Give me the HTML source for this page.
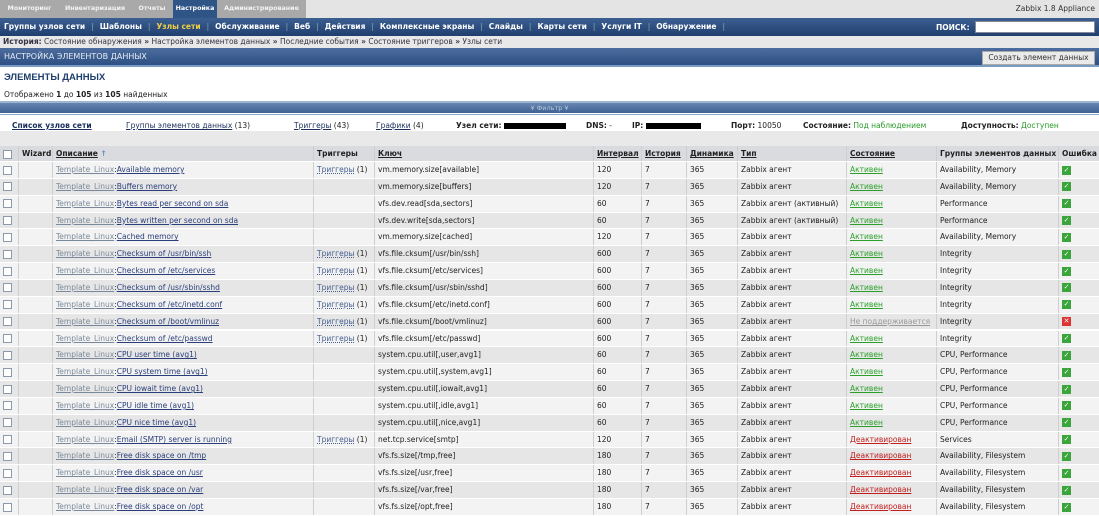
<!DOCTYPE html>
<html><head><meta charset="utf-8"><style>
*{margin:0;padding:0;box-sizing:border-box}
body{width:1099px;height:510px;overflow:hidden;background:#fff;font-family:"DejaVu Sans",Verdana,sans-serif;font-size:7.5px;color:#222;position:relative}
.abs{position:absolute}
#top{left:0;top:0;width:1099px;height:18px;background:#e4e4e4}
.tab{position:absolute;top:0;height:18px;line-height:17px;color:#f4f4f4;font-weight:bold;background:#a9a9a9;font-size:6.3px;text-align:center;white-space:nowrap;overflow:hidden}
#sub{left:0;top:18px;width:1099px;height:18px;background:linear-gradient(#3c5f92,#1f3f6e);color:#fff;font-weight:bold;line-height:18px;padding-left:4px;white-space:nowrap}
#sub span.sep{color:#8aa;margin:0 6px;font-weight:normal}
#hist{left:0;top:36px;width:1099px;height:12px;background:#e8e8e8;line-height:12px;padding-left:3px;color:#334;white-space:nowrap}
#title{left:0;top:48px;width:1099px;height:19px;background:linear-gradient(#4d6d9e,#2d4f82);color:#e6ecf4;line-height:18px;padding-left:4px;border-bottom:2px solid #7a9cc4;font-size:8px}
#btn{right:4px;top:51px;width:113px;height:14px;background:#eaeaea;border:1px solid #aaa;color:#333;text-align:center;line-height:12px}
#h1{left:4px;top:72px;font-weight:bold;font-size:9.5px;color:#1e3e6b;font-family:"Liberation Sans",sans-serif}
#cnt{left:4px;top:90px}
#flt{left:0;top:101px;width:1099px;height:12px;background:linear-gradient(#6785b0,#3f6193);border-top:2px solid #9db5d3;color:#b8c8dc;text-align:center;line-height:10px;font-size:6.5px}
#links{left:0;top:114px;width:1099px;height:17px;border-top:1px solid #8aa6c8;background:#fff}
#links .a{position:absolute;top:6px;white-space:nowrap}
u{text-decoration:underline}
.bl{color:#1a2f5c}
.gr{color:#2a9a2a}
.blk{display:inline-block;background:#000;height:6px;vertical-align:middle}
#gap{left:0;top:131px;width:1099px;height:15px;background:#e9e9e9}
.row{position:absolute;left:0;width:1099px;height:16.85px;border-bottom:1px solid #fff}
.row div{position:absolute;top:0;height:100%;line-height:16px;white-space:nowrap;overflow:hidden;padding-left:3px;border-left:1px solid #cfcfcf}
.hd{background:#d9dbdf;font-weight:bold;top:146px;height:16px}
.cb{display:inline-block;width:9px;height:9px;border:1px solid #8a9aaa;background:#fff;vertical-align:middle;margin-left:2px}
.ok{display:inline-block;width:9px;height:9px;background:#3aa53a;vertical-align:middle;color:#fff;font-size:7px;line-height:9px;text-align:center}
.er{background:#d33}
.tl{color:#7a8a9a}
.ds{color:#2a3f7a}
.tr{color:#45608f}
.act{color:#2aa02a;text-decoration:underline}
.dis{color:#c02020;text-decoration:underline}
.ns{color:#999;text-decoration:underline}
</style></head><body>
<div id="top" class="abs"></div>
<div class="tab" style="left:0;width:59px">Мониторинг</div>
<div class="tab" style="left:59px;width:72px">Инвентаризация</div>
<div class="tab" style="left:131px;width:42px">Отчеты</div>
<div class="tab" style="left:173px;width:44px;background:#2f5486;color:#fff">Настройка</div>
<div class="tab" style="left:217px;width:89px">Администрирование</div>
<div class="abs" style="right:4px;top:4px;color:#333">Zabbix 1.8 Appliance</div>
<div id="sub" class="abs">Группы узлов сети<span class="sep">|</span>Шаблоны<span class="sep">|</span><span style="color:#f0d040">Узлы сети</span><span class="sep">|</span>Обслуживание<span class="sep">|</span>Веб<span class="sep">|</span>Действия<span class="sep">|</span>Комплексные экраны<span class="sep">|</span>Слайды<span class="sep">|</span>Карты сети<span class="sep">|</span>Услуги IT<span class="sep">|</span>Обнаружение<span class="sep">|</span></div>
<div class="abs" style="left:936px;top:23px;color:#fff;font-weight:bold">ПОИСК:</div>
<div class="abs" style="left:975px;top:21px;width:120px;height:12px;background:#fff;border:1px solid #889"></div>
<div id="hist" class="abs"><b>История:</b> Состояние обнаружения <b>»</b> Настройка элементов данных <b>»</b> Последние события <b>»</b> Состояние триггеров <b>»</b> Узлы сети</div>
<div id="title" class="abs">НАСТРОЙКА ЭЛЕМЕНТОВ ДАННЫХ</div>
<div id="btn" class="abs">Создать элемент данных</div>
<div id="h1" class="abs">ЭЛЕМЕНТЫ ДАННЫХ</div>
<div id="cnt" class="abs">Отображено <b>1</b> до <b>105</b> из <b>105</b> найденных</div>
<div id="flt" class="abs">¥ Фильтр ¥</div>
<div id="links" class="abs">
<span class="a bl" style="left:12px;font-weight:bold"><u>Список узлов сети</u></span>
<span class="a" style="left:126px"><u class="bl">Группы элементов данных</u> (13)</span>
<span class="a" style="left:294px"><u class="bl">Триггеры</u> (43)</span>
<span class="a" style="left:376px"><u class="bl">Графики</u> (4)</span>
<span class="a" style="left:456px"><b>Узел сети:</b> <span class="blk" style="width:62px"></span></span>
<span class="a" style="left:586px"><b>DNS:</b> -</span>
<span class="a" style="left:632px"><b>IP:</b> <span class="blk" style="width:55px"></span></span>
<span class="a" style="left:731px"><b>Порт:</b> 10050</span>
<span class="a" style="left:803px"><b>Состояние:</b> <span class="gr">Под наблюдением</span></span>
<span class="a" style="left:961px"><b>Доступность:</b> <span class="gr">Доступен</span></span>
</div>
<div id="gap" class="abs"></div>
<div class="row hd">
<div style="left:0;border:none;padding-left:1px"><span class="cb"></span></div>
<div style="left:18px;width:34px">Wizard</div>
<div style="left:52px;width:261px"><u>Описание</u> <span style="color:#6a8ac0">↑</span></div>
<div style="left:313px;width:61px">Триггеры</div>
<div style="left:374px;width:219px"><u>Ключ</u></div>
<div style="left:593px;width:48px"><u>Интервал</u></div>
<div style="left:641px;width:45px"><u>История</u></div>
<div style="left:686px;width:51px"><u>Динамика</u></div>
<div style="left:737px;width:109px"><u>Тип</u></div>
<div style="left:846px;width:90px"><u>Состояние</u></div>
<div style="left:936px;width:122px">Группы элементов данных</div>
<div style="left:1058px;width:41px">Ошибка</div>
</div>
<div id="rows"></div>
<script>
var R=[
["Available memory",1,"vm.memory.size[available]",120,"Zabbix агент","a","Availability, Memory"],
["Buffers memory",0,"vm.memory.size[buffers]",120,"Zabbix агент","a","Availability, Memory"],
["Bytes read per second on sda",0,"vfs.dev.read[sda,sectors]",60,"Zabbix агент (активный)","a","Performance"],
["Bytes written per second on sda",0,"vfs.dev.write[sda,sectors]",60,"Zabbix агент (активный)","a","Performance"],
["Cached memory",0,"vm.memory.size[cached]",120,"Zabbix агент","a","Availability, Memory"],
["Checksum of /usr/bin/ssh",1,"vfs.file.cksum[/usr/bin/ssh]",600,"Zabbix агент","a","Integrity"],
["Checksum of /etc/services",1,"vfs.file.cksum[/etc/services]",600,"Zabbix агент","a","Integrity"],
["Checksum of /usr/sbin/sshd",1,"vfs.file.cksum[/usr/sbin/sshd]",600,"Zabbix агент","a","Integrity"],
["Checksum of /etc/inetd.conf",1,"vfs.file.cksum[/etc/inetd.conf]",600,"Zabbix агент","a","Integrity"],
["Checksum of /boot/vmlinuz",1,"vfs.file.cksum[/boot/vmlinuz]",600,"Zabbix агент","n","Integrity"],
["Checksum of /etc/passwd",1,"vfs.file.cksum[/etc/passwd]",600,"Zabbix агент","a","Integrity"],
["CPU user time (avg1)",0,"system.cpu.util[,user,avg1]",60,"Zabbix агент","a","CPU, Performance"],
["CPU system time (avg1)",0,"system.cpu.util[,system,avg1]",60,"Zabbix агент","a","CPU, Performance"],
["CPU iowait time (avg1)",0,"system.cpu.util[,iowait,avg1]",60,"Zabbix агент","a","CPU, Performance"],
["CPU idle time (avg1)",0,"system.cpu.util[,idle,avg1]",60,"Zabbix агент","a","CPU, Performance"],
["CPU nice time (avg1)",0,"system.cpu.util[,nice,avg1]",60,"Zabbix агент","a","CPU, Performance"],
["Email (SMTP) server is running",1,"net.tcp.service[smtp]",120,"Zabbix агент","d","Services"],
["Free disk space on /tmp",0,"vfs.fs.size[/tmp,free]",180,"Zabbix агент","d","Availability, Filesystem"],
["Free disk space on /usr",0,"vfs.fs.size[/usr,free]",180,"Zabbix агент","d","Availability, Filesystem"],
["Free disk space on /var",0,"vfs.fs.size[/var,free]",180,"Zabbix агент","d","Availability, Filesystem"],
["Free disk space on /opt",0,"vfs.fs.size[/opt,free]",180,"Zabbix агент","d","Availability, Filesystem"]];
var h="";
R.forEach(function(r,i){
var top=162+i*16.85,bg=i%2?"#e6e6e6":"#f3f3f3";
var st=r[5]=="a"?'<span class="act">Активен</span>':r[5]=="d"?'<span class="dis">Деактивирован</span>':'<span class="ns">Не поддерживается</span>';
h+='<div class="row" style="top:'+top+'px;background:'+bg+'">'+
'<div style="left:0;border:none;padding-left:1px"><span class="cb"></span></div>'+
'<div style="left:18px;width:34px"></div>'+
'<div style="left:52px;width:261px"><u class="tl">Template_Linux</u>:<u class="ds">'+r[0]+'</u></div>'+
'<div style="left:313px;width:61px">'+(r[1]?'<u class="tr" style="text-decoration-style:dotted">Триггеры</u> (1)':'')+'</div>'+
'<div style="left:374px;width:219px">'+r[2]+'</div>'+
'<div style="left:593px;width:48px">'+r[3]+'</div>'+
'<div style="left:641px;width:45px">7</div>'+
'<div style="left:686px;width:51px">365</div>'+
'<div style="left:737px;width:109px">'+r[4]+'</div>'+
'<div style="left:846px;width:90px">'+st+'</div>'+
'<div style="left:936px;width:122px">'+r[6]+'</div>'+
'<div style="left:1058px;width:41px">'+(r[5]=="n"?'<span class="ok er">✕</span>':'<span class="ok">✓</span>')+'</div></div>';
});
document.getElementById("rows").innerHTML=h;
</script>
</body></html>
